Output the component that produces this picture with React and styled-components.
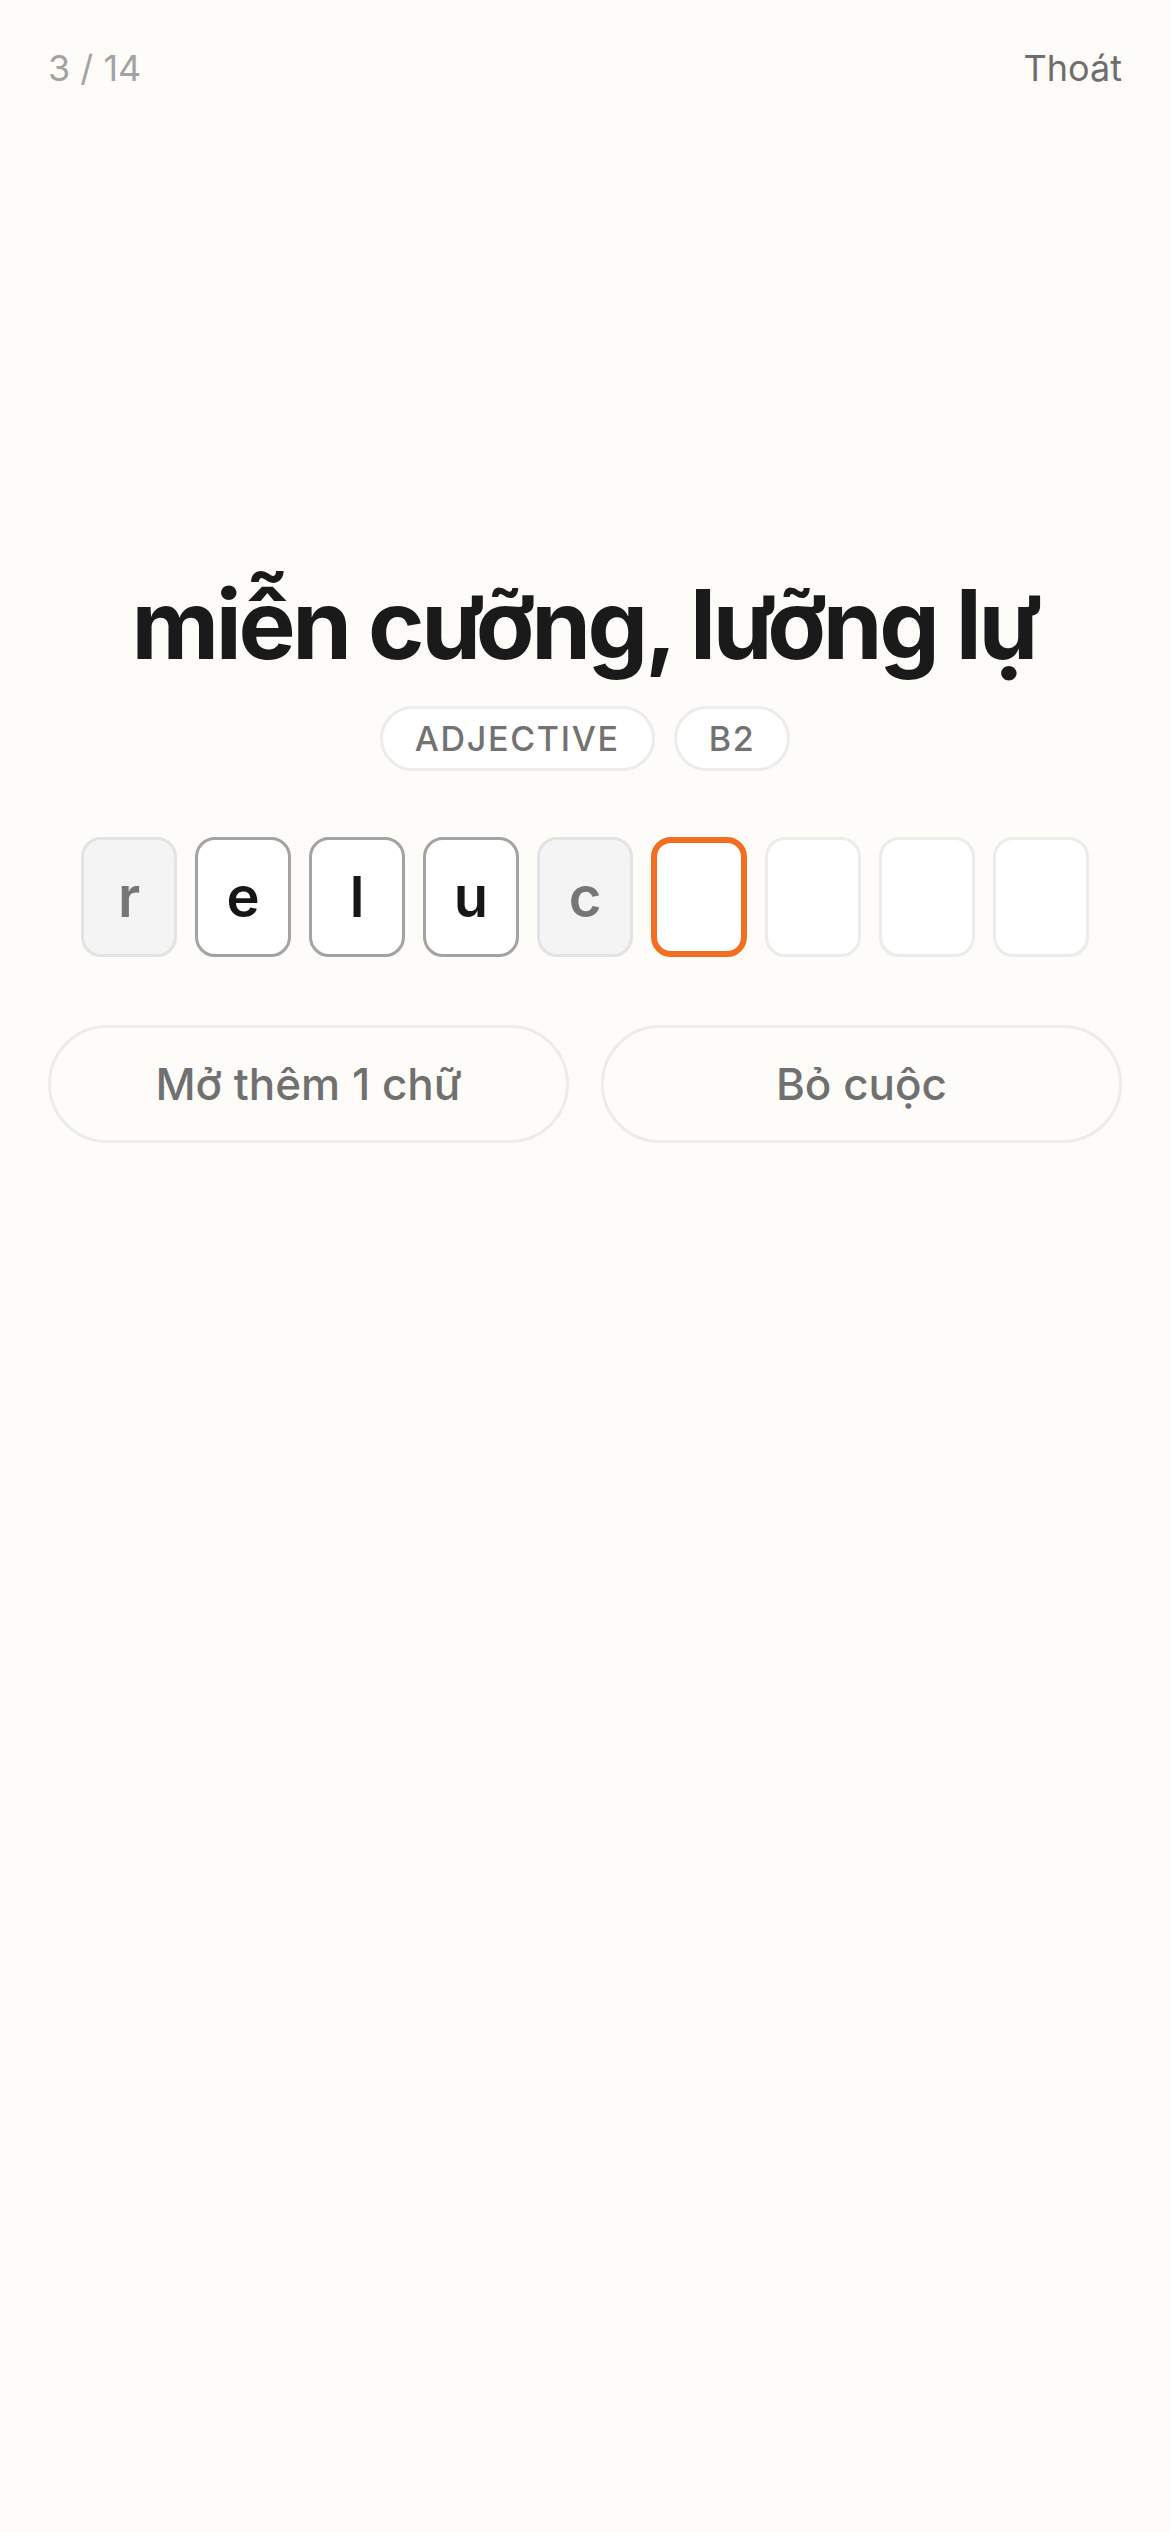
import styled, { createGlobalStyle } from 'styled-components';

const GlobalStyle = createGlobalStyle`
  html, body {
    margin: 0;
    padding: 0;
    background: #fdfcf9;
  }
  body {
    font-family: Inter, "Noto Sans", "Liberation Sans", sans-serif;
  }
`;

const Page = styled.div`
  min-height: 2532px;
  background: #fdfcf9;
  display: flex;
  flex-direction: column;
  box-sizing: border-box;
`;

const TopBar = styled.div`
  display: flex;
  justify-content: space-between;
  align-items: center;
  padding: 46px 48px 0;
  font-size: 36px;
  line-height: 44px;
`;

const Counter = styled.span`
  color: #a3a3a3;
`;

const ExitLink = styled.span`
  color: #6e6e6e;
`;

const Main = styled.div`
  display: flex;
  flex-direction: column;
  align-items: center;
  margin-top: 477px;
`;

const Word = styled.h1`
  margin: 0;
  font-size: 96px;
  line-height: 115px;
  font-weight: 700;
  letter-spacing: -0.035em;
  color: #1a1a1a;
`;

const Tags = styled.div`
  display: flex;
  gap: 19px;
  margin-top: 24px;
`;

const Tag = styled.span`
  display: flex;
  align-items: center;
  height: 65px;
  box-sizing: border-box;
  padding: 0 32px;
  border: 3px solid #ececea;
  border-radius: 33px;
  background: #fff;
  font-size: 34px;
  font-weight: 500;
  letter-spacing: 0.05em;
  color: #727272;
`;

const Slots = styled.div`
  display: flex;
  gap: 18px;
  margin-top: 66px;
`;

const slotStyles = {
  hint: { bg: '#f4f4f5', border: '#e3e3e3', color: '#767676', width: 3 },
  typed: { bg: '#ffffff', border: '#a3a3a3', color: '#161616', width: 3 },
  active: { bg: '#ffffff', border: '#f26f21', color: '#161616', width: 6 },
  empty: { bg: '#ffffff', border: '#ececea', color: '#161616', width: 3 },
};

const Slot = styled.div`
  width: 96px;
  height: 120px;
  box-sizing: border-box;
  display: flex;
  align-items: center;
  justify-content: center;
  border-radius: 20px;
  background: ${(p) => slotStyles[p.$kind].bg};
  border: ${(p) => slotStyles[p.$kind].width}px solid ${(p) => slotStyles[p.$kind].border};
  color: ${(p) => slotStyles[p.$kind].color};
  font-size: 56px;
  font-weight: 600;
`;

const Actions = styled.div`
  display: grid;
  grid-template-columns: 1fr 1fr;
  gap: 32px;
  padding: 0 48px;
  margin-top: 68px;
`;

const ActionButton = styled.button`
  height: 118px;
  border: 3px solid #ececea;
  border-radius: 59px;
  background: #fdfcf9;
  font-family: inherit;
  font-size: 44px;
  font-weight: 500;
  color: #707070;
`;

const slots = [
  { ch: 'r', kind: 'hint' },
  { ch: 'e', kind: 'typed' },
  { ch: 'l', kind: 'typed' },
  { ch: 'u', kind: 'typed' },
  { ch: 'c', kind: 'hint' },
  { ch: '', kind: 'active' },
  { ch: '', kind: 'empty' },
  { ch: '', kind: 'empty' },
  { ch: '', kind: 'empty' },
];

export default function App() {
  return (
    <Page>
      <GlobalStyle />
      <TopBar>
        <Counter>3 / 14</Counter>
        <ExitLink>Thoát</ExitLink>
      </TopBar>
      <Main>
        <Word>miễn cưỡng, lưỡng lự</Word>
        <Tags>
          <Tag>ADJECTIVE</Tag>
          <Tag>B2</Tag>
        </Tags>
        <Slots>
          {slots.map((s, i) => (
            <Slot key={i} $kind={s.kind}>{s.ch}</Slot>
          ))}
        </Slots>
      </Main>
      <Actions>
        <ActionButton>Mở thêm 1 chữ</ActionButton>
        <ActionButton>Bỏ cuộc</ActionButton>
      </Actions>
    </Page>
  );
}
